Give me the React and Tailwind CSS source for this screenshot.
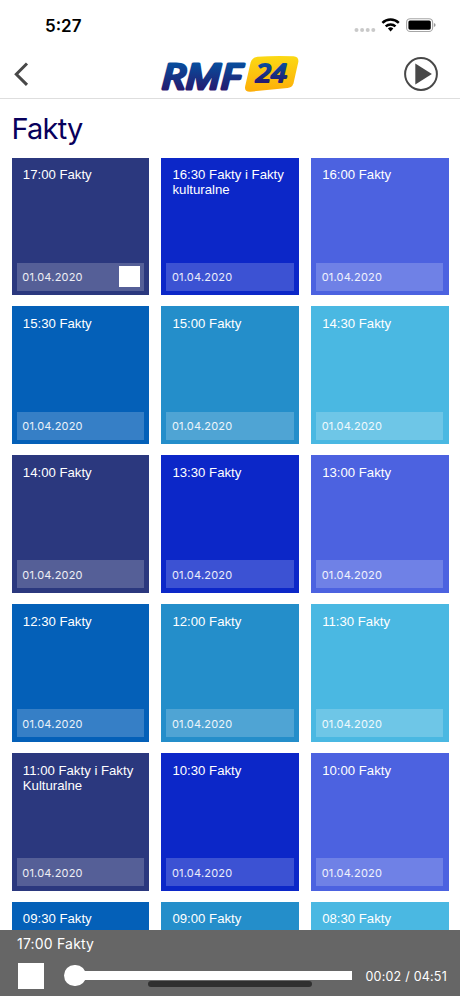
import React from 'react';

const COLORS = [
  'bg-[#2b387e]',
  'bg-[#0c27c8]',
  'bg-[#4c62e0]',
  'bg-[#0460b8]',
  'bg-[#248eca]',
  'bg-[#4ab8e2]'
];

const episodes = [
  { title: '17:00 Fakty', playing: true },
  { title: '16:30 Fakty i Fakty kulturalne' },
  { title: '16:00 Fakty' },
  { title: '15:30 Fakty' },
  { title: '15:00 Fakty' },
  { title: '14:30 Fakty' },
  { title: '14:00 Fakty' },
  { title: '13:30 Fakty' },
  { title: '13:00 Fakty' },
  { title: '12:30 Fakty' },
  { title: '12:00 Fakty' },
  { title: '11:30 Fakty' },
  { title: '11:00 Fakty i Fakty Kulturalne' },
  { title: '10:30 Fakty' },
  { title: '10:00 Fakty' },
  { title: '09:30 Fakty' },
  { title: '09:00 Fakty' },
  { title: '08:30 Fakty' }
];

const StatusBar = () => (
  <div className="h-[50px] shrink-0 flex justify-between pl-[45px] pr-[24px] pt-[15px]">
    <span className="pt-px text-[17px] leading-[21px] font-semibold text-black">5:27</span>
    <svg width="82" height="20" viewBox="0 0 82 20" fill="none">
      {/* No signal dots */}
      <g fill="#c9c9c9">
        <circle cx="2.5" cy="15" r="2" />
        <circle cx="8.1" cy="15" r="2" />
        <circle cx="13.7" cy="15" r="2" />
        <circle cx="19.3" cy="15" r="2" />
      </g>
      {/* Wifi */}
      <g stroke="#000" strokeWidth="2.5">
        <path d="M28.4 7.8a12 12 0 0 1 16.4 0" />
        <path d="M31.7 11.3a7.2 7.2 0 0 1 9.8 0" />
      </g>
      <path d="M33.9 13.6a3.9 3.9 0 0 1 5.4 0L36.6 16.4z" fill="#000" />
      {/* Battery */}
      <rect x="52.6" y="3.7" width="26" height="12.8" rx="3.6" stroke="#a6a6a6" strokeWidth="1.1" />
      <rect x="54.4" y="5.5" width="22.4" height="9.2" rx="1.6" fill="#000" />
      <path d="M79.9 8.1q1.7.5 1.7 2t-1.7 2z" fill="#999" />
    </svg>
  </div>
);

const Logo = () => (
  <svg width="140" height="40" viewBox="0 0 140 40" className="overflow-visible">
    <defs>
      <linearGradient id="navy" x1="0" y1="0" x2="0" y2="1">
        <stop offset="0.25" stopColor="#084c9c" />
        <stop offset="0.8" stopColor="#251c70" />
      </linearGradient>
      <linearGradient id="gold" x1="0" y1="0" x2="0" y2="1">
        <stop offset="0" stopColor="#fbd914" />
        <stop offset="1" stopColor="#fdae09" />
      </linearGradient>
    </defs>
    <path
      d="M98.5 .7Q115 -.3 134.5 .3Q140 .7 139.3 6L134.5 27.2Q133 31.5 128.5 32.1L91.5 35.7Q85.2 36 86.1 30.5L91.6 6.6Q93.3 1.2 98.5 .7Z"
      fill="url(#gold)"
    />
    <text
      x="2.5"
      y="32.5"
      textLength="79"
      lengthAdjust="spacingAndGlyphs"
      fill="url(#navy)"
      stroke="url(#navy)"
      strokeWidth="3.2"
      strokeLinejoin="round"
      strokeLinecap="round"
      className="font-['Open_Sans','Liberation_Sans',sans-serif] text-[34px] leading-none font-medium italic"
    >
      RMF
    </text>
    <text
      x="96.5"
      y="25.7"
      textLength="31"
      lengthAdjust="spacingAndGlyphs"
      fill="url(#navy)"
      stroke="url(#navy)"
      strokeWidth="2.2"
      strokeLinejoin="round"
      strokeLinecap="round"
      className="font-['Open_Sans','Liberation_Sans',sans-serif] text-[25px] leading-none font-medium italic"
    >
      24
    </text>
  </svg>
);

const Header = () => (
  <header className="h-[49px] shrink-0 flex items-center justify-between border-b border-[#dedede] pl-[13px] pr-[22px]">
    <button type="button" aria-label="Wstecz">
      <svg width="18" height="26" viewBox="0 0 18 26" fill="none" stroke="#484848" strokeWidth="3">
        <path d="M14 2.5L3.3 13.2L14 23.9" />
      </svg>
    </button>
    <div className="pt-[3px] pl-[22px]">
      <Logo />
    </div>
    <button type="button" aria-label="Odtwarzaj">
      <svg width="34" height="34" viewBox="0 0 34 34">
        <circle cx="17" cy="17" r="15.9" fill="none" stroke="#484848" strokeWidth="2" />
        <path d="M11.3 6.6L27.9 17L11.3 27.4z" fill="#484848" />
      </svg>
    </button>
  </header>
);

const EpisodeCard = ({ title, color, playing }) => (
  <div className={`h-[137.5px] flex flex-col justify-between px-[5.3px] pt-[9.5px] pb-[4.3px] text-white ${color}`}>
    <h2 className="px-[6px] font-['Liberation_Sans',sans-serif] text-[13.2px] leading-[15px]">{title}</h2>
    <div className="h-[28px] flex items-center justify-between bg-white/20 pl-[5.5px] pr-[3.7px]">
      <span className="pt-px text-[11px] tracking-[0.2px] text-white/90">01.04.2020</span>
      {playing && <span className="size-[21.5px] bg-white" />}
    </div>
  </div>
);

const Player = () => (
  <footer className="relative h-[66.5px] shrink-0 bg-[#666] text-white">
    <p className="pl-[17px] pt-[5px] text-[14px] leading-[17px] tracking-[0.2px]">17:00 Fakty</p>
    <div className="flex items-center pt-[11px] pl-[18px] pr-[13px]">
      <button type="button" aria-label="Stop" className="size-[26px] bg-white" />
      <div className="ml-[20px] flex w-[288px] items-center">
        <span className="size-[21.5px] rounded-full bg-white" />
        <span className="-ml-1 h-[9px] flex-1 bg-white" />
      </div>
      <span className="ml-auto whitespace-nowrap pt-[3px] text-[12.5px] tracking-[0.22px]">00:02 / 04:51</span>
    </div>
    {/* Home indicator */}
    <div className="absolute left-[148px] top-[51.5px] h-[5.5px] w-[164px] rounded-full bg-[#303030]" />
  </footer>
);

const App = () => {
  return (
    <div className="flex h-[996px] w-[460px] flex-col overflow-hidden bg-white font-['Inter','Liberation_Sans',sans-serif]">
      <StatusBar />
      <Header />
      <main className="min-h-0 flex-1 overflow-hidden px-[11.5px]">
        <h1 className="h-[58.5px] pt-[12px] text-[29px] leading-[36px] tracking-[-0.8px] text-[#08005c]">Fakty</h1>
        <div className="grid grid-cols-3 gap-x-[12px] gap-y-[11.4px]">
          {episodes.map((episode, index) => (
            <EpisodeCard
              key={episode.title}
              title={episode.title}
              playing={episode.playing}
              color={COLORS[index % COLORS.length]}
            />
          ))}
        </div>
      </main>
      <Player />
    </div>
  );
};

export default App;
